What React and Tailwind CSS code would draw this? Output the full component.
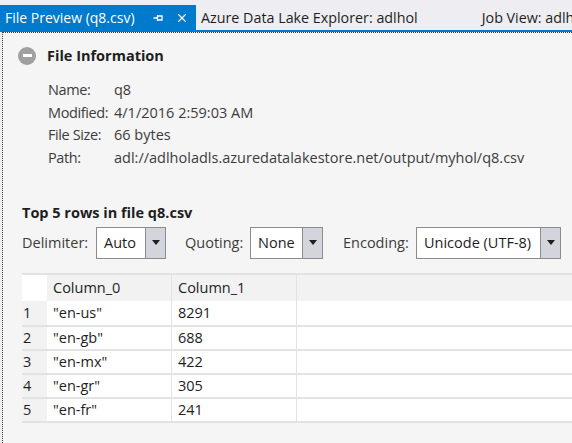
import { X } from "lucide-react";

const rows = [
  ["1", '"en-us"', "8291"],
  ["2", '"en-gb"', "688"],
  ["3", '"en-mx"', "422"],
  ["4", '"en-gr"', "305"],
  ["5", '"en-fr"', "241"],
];

const info = [
  ["Name:", "q8"],
  ["Modified:", "4/1/2016 2:59:03 AM"],
  ["File Size:", "66 bytes"],
  ["Path:", "adl://adlholadls.azuredatalakestore.net/output/myhol/q8.csv"],
];

function Combo({ value, width }) {
  return (
    <div className={`flex h-[32px] border border-[#8c8c8c] bg-white ${width}`}>
      <div className="flex flex-1 items-center px-[7px] text-[#1e1e1e]">{value}</div>
      <div className="flex w-[20px] items-center justify-center border-l border-[#8c8c8c] bg-[#d4d4dc]">
        <svg width="8" height="5" viewBox="0 0 8 5">
          <path d="M0 0H8L4 5Z" fill="#1e1e1e" />
        </svg>
      </div>
    </div>
  );
}

export default function App() {
  return (
    <div className="flex h-[443px] w-[572px] flex-col overflow-hidden bg-[#eeeef2] font-['Open_Sans',sans-serif] text-[#1e1e1e]">
      <div className="flex h-[30px] items-end whitespace-nowrap text-[14.3px]">
        <div className="flex h-[25px] w-[196px] shrink-0 items-center bg-[#007acc] pl-[5px] text-[14px] text-white">
          <span>File Preview (q8.csv)</span>
          <svg className="ml-[17px]" width="12" height="12" viewBox="0 0 12 12">
            <path d="M1.5 6H5.5M5.5 3V9M5.5 4H10V8H5.5" stroke="white" strokeWidth="1.3" fill="none" />
          </svg>
          <X className="ml-[11px]" size={14} strokeWidth={2} color="white" />
        </div>
        <div className="flex h-[25px] shrink-0 items-center pl-[5px] text-[#1e1e1e]">Azure Data Lake Explorer: adlhol</div>
        <div className="flex h-[25px] shrink-0 items-center pl-[64px] text-[#1e1e1e]">Job View: adlhol</div>
      </div>
      <div className="h-[2px] bg-[#007acc]" />
      <div className="ml-[2px] flex flex-1 flex-col border-l border-t border-dotted border-[#3a3a3a] bg-[#f5f5f5] text-[14.5px]">
        <div className="flex items-center gap-[11px] pl-[15px] pt-[12px]">
          <div className="flex h-[18px] w-[18px] items-center justify-center rounded-full bg-[#a0a0a0]">
            <div className="h-[3px] w-[9px] bg-white" />
          </div>
          <span className="font-bold">File Information</span>
        </div>
        <div className="mt-[12px] flex flex-col pl-[45px] text-[#3c3c3c]">
          {info.map(([k, v]) => (
            <div key={k} className="flex h-[22.5px] items-center">
              <span className="w-[66px] tracking-[-0.4px]">{k}</span>
              <span>{v}</span>
            </div>
          ))}
        </div>
        <div className="ml-[19px] mt-[33px] font-bold">Top 5 rows in file q8.csv</div>
        <div className="ml-[19px] mt-[3px] flex items-center text-[#3c3c3c]">
          <span className="w-[74px]">Delimiter:</span>
          <Combo value="Auto" width="w-[70px]" />
          <span className="ml-[19px] w-[65px]">Quoting:</span>
          <Combo value="None" width="w-[73px]" />
          <span className="ml-[20px] w-[73px]">Encoding:</span>
          <Combo value="Unicode (UTF-8)" width="w-[145px]" />
        </div>
        <div className="ml-[19px] mt-[14px] flex flex-col border-t-2 border-b-2 border-[#e2e2e2]">
          <div className="flex h-[26px] bg-[#f2f2f2]">
            <div className="w-[25px] bg-white" />
            <div className="flex w-[125px] items-center border-r border-[#e2e2e2] pl-[6px]">Column_0</div>
            <div className="flex w-[125px] items-center border-r border-[#e2e2e2] pl-[6px]">Column_1</div>
            <div className="flex-1" />
          </div>
          {rows.map(([n, a, b], i) => (
            <div key={n} className={`flex h-[24px] ${i > 0 ? "border-t-2 border-[#e2e2e2]" : ""}`}>
              <div className="flex w-[25px] items-center bg-[#f2f2f2] pl-[1px]">{n}</div>
              <div className="flex w-[125px] items-center border-r border-[#e2e2e2] bg-white pl-[6px]">{a}</div>
              <div className="flex w-[125px] items-center border-r border-[#e2e2e2] bg-white pl-[6px]">{b}</div>
              <div className="flex-1 bg-white" />
            </div>
          ))}
        </div>
      </div>
    </div>
  );
}
